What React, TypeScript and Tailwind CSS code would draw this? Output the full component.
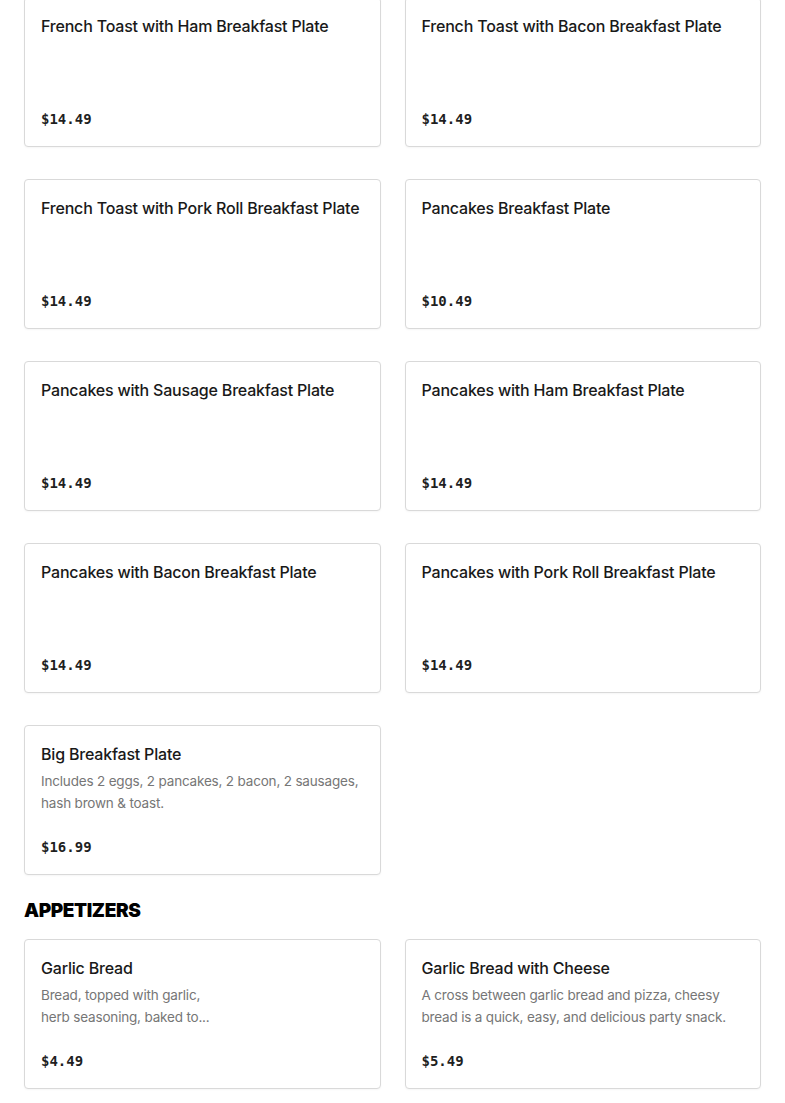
import React from 'react'

type Item = {
  name: string
  price: string
  desc?: React.ReactNode
}

const breakfast: Item[] = [
  { name: 'French Toast with Ham Breakfast Plate', price: '$14.49' },
  { name: 'French Toast with Bacon Breakfast Plate', price: '$14.49' },
  { name: 'French Toast with Pork Roll Breakfast Plate', price: '$14.49' },
  { name: 'Pancakes Breakfast Plate', price: '$10.49' },
  { name: 'Pancakes with Sausage Breakfast Plate', price: '$14.49' },
  { name: 'Pancakes with Ham Breakfast Plate', price: '$14.49' },
  { name: 'Pancakes with Bacon Breakfast Plate', price: '$14.49' },
  { name: 'Pancakes with Pork Roll Breakfast Plate', price: '$14.49' },
  {
    name: 'Big Breakfast Plate',
    price: '$16.99',
    desc: 'Includes 2 eggs, 2 pancakes, 2 bacon, 2 sausages, hash brown & toast.',
  },
]

const appetizers: Item[] = [
  {
    name: 'Garlic Bread',
    price: '$4.49',
    desc: (
      <>
        Bread, topped with garlic,
        <br />
        herb seasoning, baked to...
      </>
    ),
  },
  {
    name: 'Garlic Bread with Cheese',
    price: '$5.49',
    desc: 'A cross between garlic bread and pizza, cheesy bread is a quick, easy, and delicious party snack.',
  },
]

function MenuCard({ item }: { item: Item }) {
  return (
    <div className="flex h-[150px] flex-col rounded border border-[#d9d9d9] bg-white p-4 shadow-[0_1px_2px_rgba(0,0,0,0.04)]">
      <h3 className="text-base leading-6 font-medium tracking-[-0.2px] text-[#191919]">{item.name}</h3>
      {item.desc && (
        <p className="mt-1 text-[13.5px] leading-[22px] tracking-[-0.18px] text-[#767676]">{item.desc}</p>
      )}
      <div className="mt-auto font-['DejaVu_Sans_Mono',monospace] text-sm leading-[22px] font-bold text-[#1f1f1f]">
        {item.price}
      </div>
    </div>
  )
}

export default function App() {
  return (
    <div className="min-h-screen bg-white px-6 font-['Inter','Liberation_Sans',sans-serif]">
      <div className="-mt-[3px] grid grid-cols-2 gap-x-6 gap-y-8">
        {breakfast.map((item) => (
          <MenuCard key={item.name} item={item} />
        ))}
      </div>

      <h2 className="mt-[22px] mb-[14px] text-[19px] leading-7 font-black tracking-[-0.4px] text-black">
        APPETIZERS
      </h2>

      <div className="grid grid-cols-2 gap-x-6 gap-y-8 pb-8">
        {appetizers.map((item) => (
          <MenuCard key={item.name} item={item} />
        ))}
      </div>
    </div>
  )
}
